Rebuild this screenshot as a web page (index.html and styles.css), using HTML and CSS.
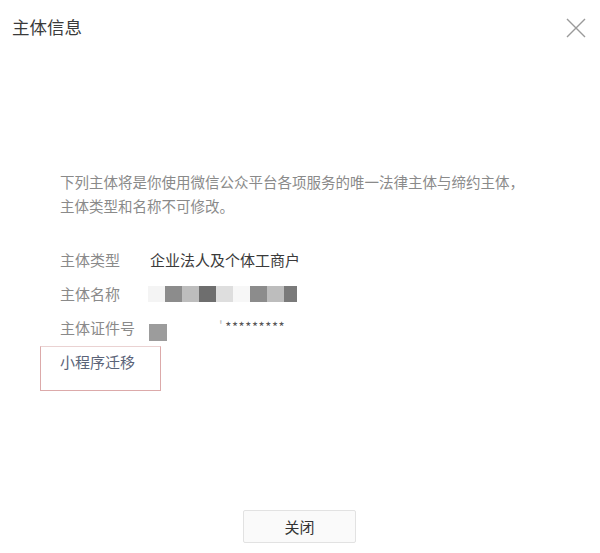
FILE: index.html
```html
<!DOCTYPE html>
<html lang="zh-CN">
<head>
    <meta charset="UTF-8">
    <meta name="viewport" content="width=device-width, initial-scale=1.0">
    <title>主体信息</title>
    <link rel="stylesheet" href="styles.css">
</head>
<body>

<div class="dialog">
    <div class="dialog-header">
        <h3 class="dialog-title">主体信息</h3>
        <button class="close-btn" aria-label="关闭">
            <svg width="20" height="20" viewBox="0 0 20 20">
                <path d="M1 1L19 19M19 1L1 19" stroke="#9a9a9a" stroke-width="1.4" fill="none"/>
            </svg>
        </button>
    </div>

    <div class="dialog-body">
        <p class="tips">下列主体将是你使用微信公众平台各项服务的唯一法律主体与缔约主体，<br>主体类型和名称不可修改。</p>

        <div class="info-row">
            <span class="info-label">主体类型</span>
            <span class="info-value">企业法人及个体工商户</span>
        </div>
        <div class="info-row">
            <span class="info-label">主体名称</span>
            <span class="info-value mosaic">
                <i class="m1"></i><i class="m2"></i><i class="m3"></i><i class="m4"></i><i class="m5"></i><i class="m6"></i><i class="m2"></i><i class="m3"></i><i class="m7"></i>
            </span>
        </div>
        <div class="info-row">
            <span class="info-label">主体证件号</span>
            <span class="info-value id-value">
                <i class="id-mask"></i>
                <span class="stars"><span class="stub">'</span>*********</span>
            </span>
        </div>

        <a class="migrate-link" href="#">小程序迁移</a>
    </div>

    <div class="dialog-footer">
        <button class="btn-default">关闭</button>
    </div>
</div>

</body>
</html>
```

FILE: styles.css
```css
:root {
    --text-color: #333;
    --muted-color: #8a8a8a;
    --font-family: 'Noto Sans CJK SC', 'Noto Sans', sans-serif;
}

body {
    margin: 0;
    background-color: #fff;
    font-family: var(--font-family);
    color: var(--text-color);
}

.dialog {
    width: 600px;
    height: 553px;
    display: flex;
    flex-direction: column;
}

.dialog-header {
    display: flex;
    justify-content: space-between;
    align-items: center;
    padding: 14px 12px 0 12px;
    height: 26px;
}

.dialog-title {
    margin: 0;
    font-size: 17.5px;
    font-weight: normal;
    line-height: 26px;
    color: #3a3a3a;
}

.close-btn {
    border: none;
    background: none;
    padding: 0;
    width: 20px;
    height: 20px;
    margin-right: 2px;
    margin-top: 2px;
    cursor: pointer;
}

.close-btn svg {
    display: block;
}

.dialog-body {
    padding: 130px 0 0 60px;
}

.tips {
    margin: 0 0 24px 0;
    font-size: 14.5px;
    line-height: 24px;
    color: var(--muted-color);
}

.info-row {
    display: flex;
    align-items: center;
    height: 34px;
}

.info-label {
    flex: 0 0 73px;
    margin-right: 17px;
    white-space: nowrap;
    font-size: 15px;
    color: var(--muted-color);
}

.info-value {
    font-size: 15px;
    color: #3a3a3a;
}

.mosaic {
    display: flex;
    margin-left: -2px;
    margin-top: 1px;
}

.mosaic i {
    display: block;
    width: 17px;
    height: 16px;
}

.mosaic .m1 { background-color: #f4f4f4; }
.mosaic .m2 { background-color: #8c8c8c; }
.mosaic .m3 { background-color: #bdbdbd; }
.mosaic .m4 { background-color: #6e6e6e; }
.mosaic .m5 { background-color: #dedede; }
.mosaic .m6 { background-color: #f7f7f7; }
.mosaic .m7 { background-color: #7a7a7a; width: 13px; }

.id-value {
    display: flex;
    align-items: center;
    margin-left: -3px;
}

.id-mask {
    display: block;
    width: 18px;
    height: 17px;
    background-color: #9c9c9c;
    margin-top: 11px;
}

.stars {
    margin-left: 52px;
    margin-top: -1px;
    font-size: 13px;
    letter-spacing: 0.6px;
    color: #555;
}

.stars .stub {
    color: #bbb;
    margin-right: 2px;
}

.migrate-link {
    display: block;
    width: 100px;
    height: 43px;
    margin: 2px 0 0 -20px;
    padding-left: 19px;
    border: 1px solid #dcaaaa;
    border-top-color: #ead2d2;
    font-size: 15px;
    line-height: 30px;
    color: #5a6378;
    text-decoration: none;
}

.dialog-footer {
    margin-top: auto;
    padding-bottom: 10px;
    display: flex;
    justify-content: center;
}

.btn-default {
    width: 113px;
    height: 33px;
    margin-left: -1px;
    font-family: var(--font-family);
    font-size: 15px;
    color: #333;
    background-color: #fafafa;
    border: 1px solid #e2e2e2;
    border-radius: 2px;
    cursor: pointer;
}
```
